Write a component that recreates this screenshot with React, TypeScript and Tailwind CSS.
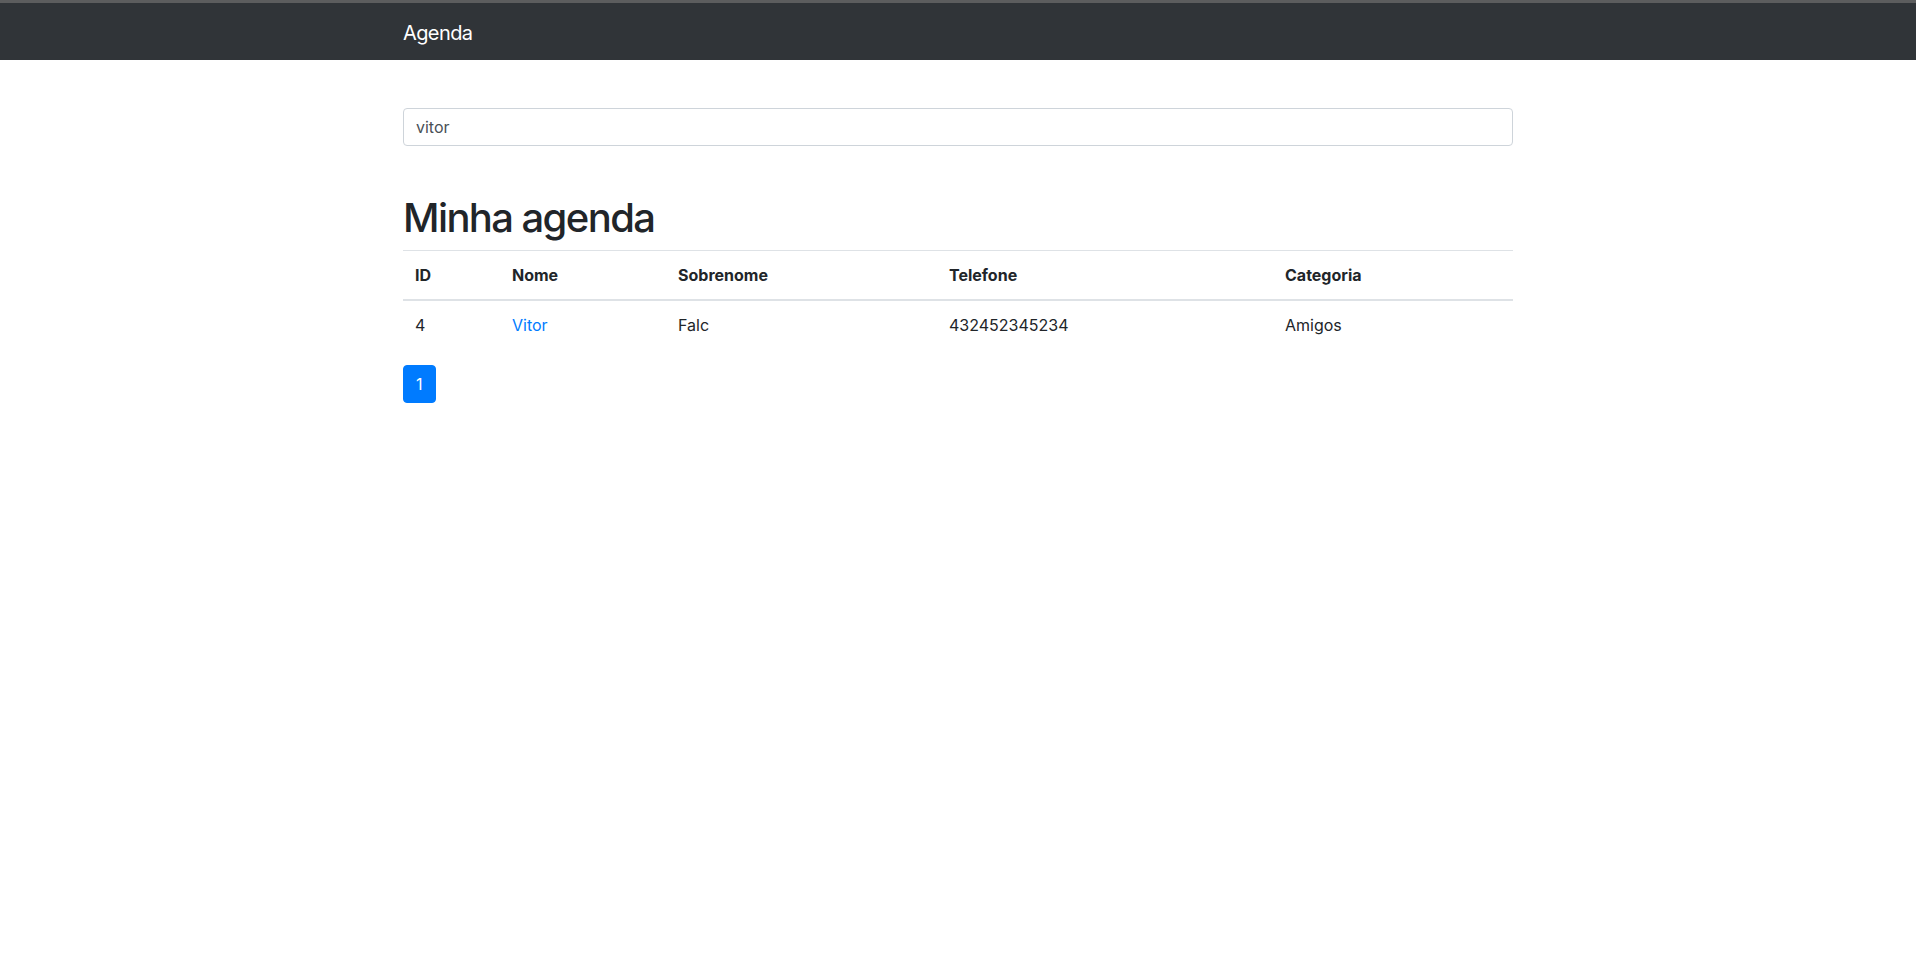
import React from 'react';

const contatos = [
  { id: 4, nome: 'Vitor', sobrenome: 'Falc', telefone: '432452345234', categoria: 'Amigos' },
];

export default function App() {
  return (
    <div className="min-h-screen bg-white text-[#212529] font-['Inter','Liberation_Sans',sans-serif] text-base">
      {/* Navbar */}
      <nav className="h-[60px] bg-[#303438] border-t-[3px] border-[#5c5d5e]">
        <div className="mx-auto w-[1140px] px-[15px] h-full flex items-center">
          <a href="#" className="text-white text-[20px] leading-[30px] pt-[2px] tracking-[-0.03em]">Agenda</a>
        </div>
      </nav>

      <div className="mx-auto w-[1140px] px-[15px] pt-12">
        <input
          type="text"
          defaultValue="vitor"
          className="block w-full h-[38px] px-3 py-1.5 text-base leading-6 text-[#495057] border border-[#ced4da] rounded outline-none"
        />

        <h1 className="mt-[48px] mb-2 text-[40px] leading-[48px] font-medium tracking-[-0.04em]">Minha agenda</h1>

        <table className="w-full border-collapse mb-4">
          <thead>
            <tr className="text-left">
              <th className="w-[97px] p-3 leading-6 font-bold border-t border-b-2 border-[#dee2e6]">ID</th>
              <th className="w-[166px] p-3 leading-6 font-bold border-t border-b-2 border-[#dee2e6]">Nome</th>
              <th className="w-[271px] p-3 leading-6 font-bold border-t border-b-2 border-[#dee2e6]">Sobrenome</th>
              <th className="w-[336px] p-3 leading-6 font-bold border-t border-b-2 border-[#dee2e6]">Telefone</th>
              <th className="p-3 leading-6 font-bold border-t border-b-2 border-[#dee2e6]">Categoria</th>
            </tr>
          </thead>
          <tbody>
            {contatos.map(c => (
              <tr key={c.id}>
                <td className="p-3 leading-6 border-t border-[#dee2e6]">{c.id}</td>
                <td className="p-3 leading-6 border-t border-[#dee2e6]">
                  <a href="#" className="text-[#007bff]">{c.nome}</a>
                </td>
                <td className="p-3 leading-6 border-t border-[#dee2e6]">{c.sobrenome}</td>
                <td className="p-3 leading-6 border-t border-[#dee2e6]">{c.telefone}</td>
                <td className="p-3 leading-6 border-t border-[#dee2e6]">{c.categoria}</td>
              </tr>
            ))}
          </tbody>
        </table>

        <ul className="flex">
          <li>
            <a href="#" className="block px-3 py-2 leading-5 text-white bg-[#007bff] border border-[#007bff] rounded">1</a>
          </li>
        </ul>
      </div>
    </div>
  );
}
